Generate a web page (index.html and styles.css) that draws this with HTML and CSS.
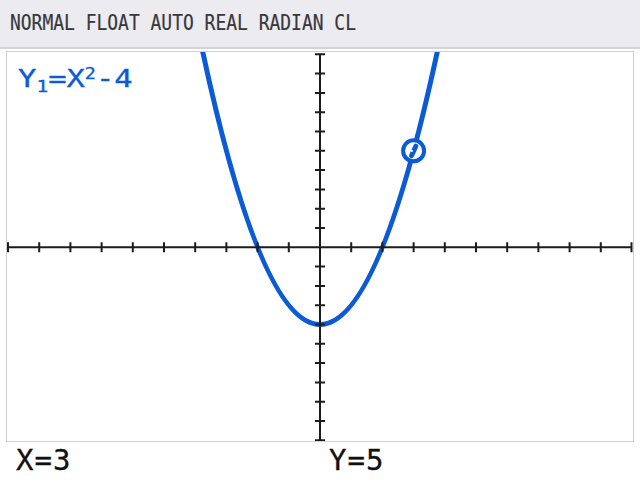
FILE: index.html
```html
<!DOCTYPE html>
<html>
<head>
<meta charset="utf-8">
<link rel="stylesheet" href="styles.css">
</head>
<body>
<div class="screen">
  <div class="status"><span class="status-text">NORMAL FLOAT AUTO REAL RADIAN CL</span></div>
  <div class="graph">
    <svg class="plot" width="626" height="389" viewBox="7 52 626 389" xmlns="http://www.w3.org/2000/svg">
      <defs>
        <clipPath id="area"><rect x="7" y="52" width="626" height="389"/></clipPath>
      </defs>
      <path class="curve" clip-path="url(#area)" d="M201.44 45.81 Q320 603.19 438.56 45.81"/>
      <path class="axis" d="M8 247.3H632M320 54.3V440.3"/>
      <path class="axis" d="M8 242.3V252.3M39.2 242.3V252.3M70.4 242.3V252.3M101.6 242.3V252.3M132.8 242.3V252.3M164 242.3V252.3M195.2 242.3V252.3M226.4 242.3V252.3M257.6 242.3V252.3M288.8 242.3V252.3M351.2 242.3V252.3M382.4 242.3V252.3M413.6 242.3V252.3M444.8 242.3V252.3M476 242.3V252.3M507.2 242.3V252.3M538.4 242.3V252.3M569.6 242.3V252.3M600.8 242.3V252.3M631.5 242.3V252.3"/>
      <path class="axis" d="M315 54.3H325M315 73.6H325M315 92.9H325M315 112.2H325M315 131.5H325M315 150.8H325M315 170.1H325M315 189.4H325M315 208.7H325M315 228H325M315 266.6H325M315 285.9H325M315 305.2H325M315 324.5H325M315 343.8H325M315 363.1H325M315 382.4H325M315 401.7H325M315 421H325M315 440.3H325"/>
      <circle class="marker" cx="413.6" cy="150.8" r="10.5"/>
      <path class="cursor" d="M415.8 146.2 L411.6 155.6"/>
      <circle class="notch" cx="411.8" cy="150.9" r="1.1"/>
    </svg>
    <div class="label">Y<span class="sub">1</span>=X<span class="sup">2</span>-4</div>
  </div>
  <div class="readout">
    <span>X=3</span>
    <span>Y=5</span>
  </div>
</div>
</body>
</html>
```
FILE: styles.css
```css
html, body {
  margin: 0;
  padding: 0;
  background: #ffffff;
}
.screen {
  width: 640px;
  height: 480px;
  overflow: hidden;
  background: #ffffff;
  font-family: "DejaVu Sans Mono", monospace;
}
.status {
  height: 47px;
  background: #ebebf0;
  border-bottom: 2px solid #d3d3d8;
  display: flex;
  align-items: center;
  padding-left: 10px;
}
.status-text {
  display: inline-block;
  font-size: 20.5px;
  line-height: 1;
  color: #38383c;
  white-space: nowrap;
  transform: scaleX(0.876);
  transform-origin: left center;
  margin-top: -1px;
  -webkit-text-stroke: 0.2px #38383c;
}
.graph {
  position: relative;
  margin: 2px 0 0 6px;
  width: 626px;
  height: 389px;
  border: 1px solid #cfcfd5;
}
.plot {
  display: block;
}
.curve {
  fill: none;
  stroke: #0b5bd7;
  stroke-width: 5;
}
.axis {
  fill: none;
  stroke: #1c1c1c;
  stroke-width: 2;
}
.marker {
  fill: #ffffff;
  stroke: #0b5bd7;
  stroke-width: 4;
}
.cursor {
  stroke: #0b5bd7;
  stroke-width: 5;
  stroke-linecap: round;
}
.notch {
  fill: #ffffff;
}
.label {
  position: absolute;
  left: 11px;
  top: 13.5px;
  font-size: 25px;
  line-height: 1;
  color: #0b5bd7;
  white-space: nowrap;
  transform: scaleX(1.22);
  transform-origin: left top;
  -webkit-text-stroke: 0.35px #0b5bd7;
}
.sub {
  font-size: 16px;
  line-height: 0;
  vertical-align: -5px;
}
.sup {
  font-size: 15px;
  line-height: 0;
  vertical-align: 8px;
}
.readout {
  display: grid;
  grid-template-columns: 313px auto;
  padding-left: 16px;
  margin-top: 4px;
  font-size: 29px;
  line-height: 1;
  letter-spacing: 1px;
  color: #111111;
  -webkit-text-stroke: 0.3px #111111;
}
```
